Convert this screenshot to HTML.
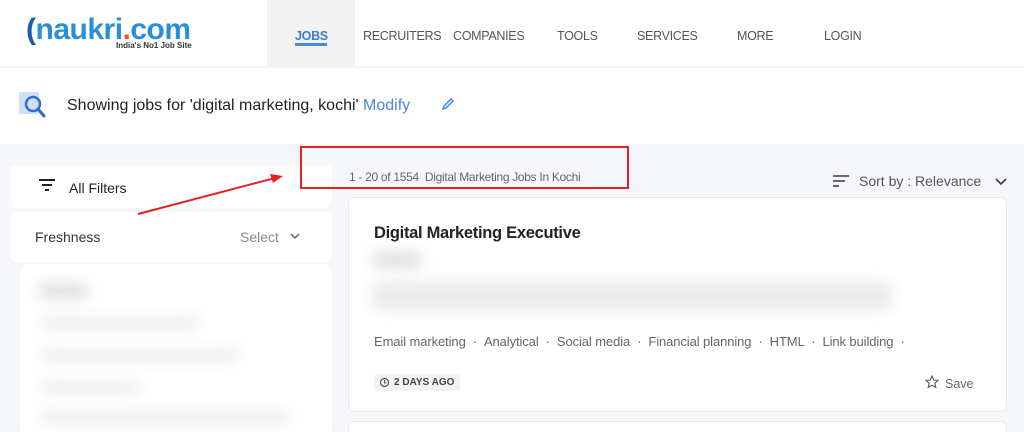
<!DOCTYPE html>
<html><head><meta charset="utf-8"><style>
*{margin:0;padding:0;box-sizing:border-box}
html,body{width:1024px;height:432px;overflow:hidden}
body{background:#f5f7fa;font-family:"Liberation Sans",sans-serif;position:relative;color:#222}
.a{position:absolute;white-space:nowrap}
.nav{font-size:12.5px;color:#555;top:29px;letter-spacing:-0.3px}
.card{position:absolute;background:#fff;border-radius:6px}
.bl{position:absolute;background:#d8d8d8;filter:blur(7px);border-radius:6px}
</style></head><body>
<div class="a" style="left:0;top:0;width:1024px;height:67px;background:#fff;border-bottom:1px solid #eef0f3"></div>
<div class="a" style="left:267px;top:0;width:88px;height:67px;background:#f3f3f3"></div>
<div class="a" style="left:26px;top:14px;font:bold 30px 'Liberation Sans',sans-serif;color:#2a8fd8;letter-spacing:-0.5px;line-height:32px"><span style="color:#1a5fa8">(</span>naukri<span style="color:#e53">.</span>com</div>
<div class="a" style="left:116px;top:41px;font:bold 8px 'Liberation Sans',sans-serif;color:#333">India's No1 Job Site</div>
<div class="a nav" style="left:295px;color:#3b7dd8;font-weight:bold">JOBS</div>
<div class="a" style="left:295px;top:43px;width:32px;height:3px;background:#4a86e0"></div>
<div class="a nav" style="left:363px">RECRUITERS</div>
<div class="a nav" style="left:453px">COMPANIES</div>
<div class="a nav" style="left:557px">TOOLS</div>
<div class="a nav" style="left:637px">SERVICES</div>
<div class="a nav" style="left:737px">MORE</div>
<div class="a nav" style="left:824px">LOGIN</div>
<div class="a" style="left:0;top:68px;width:1024px;height:76px;background:#fff"></div>
<svg class="a" style="left:19px;top:89px" width="30" height="32"><rect x="0" y="3" width="20" height="22" rx="2" fill="#cfe0f5"/><circle cx="14" cy="15" r="7" fill="none" stroke="#2f6fd0" stroke-width="2.5"/><line x1="19" y1="20" x2="25" y2="27" stroke="#2f6fd0" stroke-width="3" stroke-linecap="round"/></svg>
<div class="a" style="left:67px;top:97px;font-size:16px;color:#222">Showing jobs for 'digital marketing, kochi' <span style="color:#4a86e0">Modify</span></div>
<svg class="a" style="left:441px;top:97px" width="14" height="14"><path d="M2 12 L3 9 L10 2 L12 4 L5 11 Z" fill="none" stroke="#4a86e0" stroke-width="1.5"/></svg>
<div class="card" style="left:10px;top:165px;width:322px;height:43px"></div>
<svg class="a" style="left:38px;top:178px" width="18" height="14"><path d="M1 2h16M4 7h10M7 12h4" stroke="#222" stroke-width="2"/></svg>
<div class="a" style="left:69px;top:180px;font-size:14px">All Filters</div>
<div class="card" style="left:10px;top:212px;width:322px;height:50px"></div>
<div class="a" style="left:35px;top:229px;font-size:14px;color:#333">Freshness</div>
<div class="a" style="left:240px;top:229px;font-size:14px;color:#888">Select</div>
<svg class="a" style="left:290px;top:232px" width="10" height="8"><path d="M1 2l4 4 4-4" fill="none" stroke="#666" stroke-width="1.5"/></svg>
<div class="card" style="left:20px;top:264px;width:312px;height:170px"></div>
<div class="bl" style="left:38px;top:284px;width:50px;height:14px;background:#ddd"></div>
<div class="bl" style="left:40px;top:318px;width:160px;height:10px;background:#e8e8e8"></div>
<div class="bl" style="left:40px;top:350px;width:200px;height:10px;background:#e8e8e8"></div>
<div class="bl" style="left:40px;top:382px;width:100px;height:10px;background:#e8e8e8"></div>
<div class="bl" style="left:40px;top:412px;width:250px;height:10px;background:#e8e8e8"></div>
<div class="a" style="left:349px;top:170px;font-size:12px;color:#666;letter-spacing:-0.3px">1 - 20 of 1554&nbsp; Digital Marketing Jobs In Kochi</div>
<div class="a" style="left:300px;top:146px;width:329px;height:43px;border:2px solid #e52222"></div>
<svg class="a" style="left:0;top:0" width="300" height="230"><line x1="138" y1="214" x2="275" y2="178" stroke="#e52222" stroke-width="2"/><path d="M283 176 L270 174 L273 183 Z" fill="#e52222"/></svg>
<svg class="a" style="left:832px;top:174px" width="18" height="14"><path d="M1 2h16M1 7h12M1 12h6" stroke="#555" stroke-width="1.8"/></svg>
<div class="a" style="left:859px;top:173px;font-size:14px;color:#555">Sort by : Relevance</div>
<svg class="a" style="left:995px;top:177px" width="12" height="9"><path d="M1 2l5 5 5-5" fill="none" stroke="#444" stroke-width="1.8"/></svg>
<div class="card" style="left:348px;top:197px;width:659px;height:215px;border:1px solid #e6eaf0"></div>
<div class="a" style="left:374px;top:224px;font-size:16.5px;font-weight:bold;color:#222;letter-spacing:-0.3px">Digital Marketing Executive</div>
<div class="bl" style="left:372px;top:252px;width:50px;height:16px;background:#e0e0e0"></div>
<div class="bl" style="left:372px;top:282px;width:520px;height:28px;background:#ebebeb"></div>
<div class="a" style="left:374px;top:334px;font-size:13px;color:#666;letter-spacing:-0.1px">Email marketing &nbsp;· &nbsp;Analytical &nbsp;· &nbsp;Social media &nbsp;· &nbsp;Financial planning &nbsp;· &nbsp;HTML &nbsp;· &nbsp;Link building &nbsp;·</div>
<div class="a" style="left:374px;top:374px;width:86px;height:17px;background:#f1f3f5;border-radius:3px;font-size:10px;font-weight:bold;color:#444;padding:3px 0 0 20px">2 DAYS AGO</div>
<svg class="a" style="left:379px;top:377px" width="11" height="11"><circle cx="5.5" cy="5.5" r="4" fill="none" stroke="#555" stroke-width="1.2"/><path d="M5.5 3v3h2" fill="none" stroke="#555" stroke-width="1.1"/></svg>
<svg class="a" style="left:925px;top:375px" width="14" height="14"><path d="M7 1l1.8 4 4.2.4-3.2 2.8 1 4.2L7 10.2 3.2 12.4l1-4.2L1 5.4l4.2-.4z" fill="none" stroke="#555" stroke-width="1.1"/></svg>
<div class="a" style="left:945px;top:377px;font-size:12.5px;color:#666">Save</div>
<div class="card" style="left:348px;top:421px;width:659px;height:20px;border:1px solid #e6eaf0"></div>
</body></html>
